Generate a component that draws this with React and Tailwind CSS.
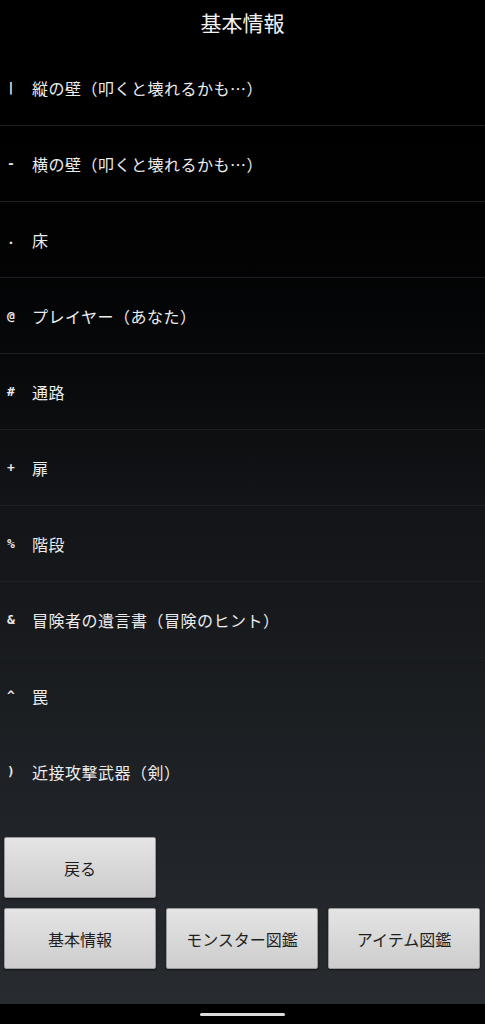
const items = [
  { sym: '|', label: '縦の壁（叩くと壊れるかも…）' },
  { sym: '-', label: '横の壁（叩くと壊れるかも…）' },
  { sym: '.', label: '床' },
  { sym: '@', label: 'プレイヤー（あなた）' },
  { sym: '#', label: '通路' },
  { sym: '+', label: '扉' },
  { sym: '%', label: '階段' },
  { sym: '&', label: '冒険者の遺言書（冒険のヒント）' },
  { sym: '^', label: '罠' },
  { sym: ')', label: '近接攻撃武器（剣）' },
];

function GrayButton({ children }) {
  return (
    <button className="h-[61px] w-[152px] rounded-[2px] border border-[#9a9a9a] bg-gradient-to-b from-[#e4e4e4] to-[#cdcdcd] text-[16px] text-[#1e1e1e] shadow-[0_1px_2px_rgba(0,0,0,0.6)]">
      {children}
    </button>
  );
}

export default function App() {
  return (
    <div
      className="flex h-[1024px] w-[485px] flex-col bg-black text-white"
      style={{ fontFamily: '"Noto Sans CJK JP", "Noto Sans", sans-serif' }}
    >
      <div className="flex flex-1 flex-col bg-gradient-to-b from-black via-[#121417] to-[#282c31]">
        <div className="flex h-[50px] items-center justify-center pb-[4px] text-[21px] text-[#f2f2f2]">
          基本情報
        </div>

        <div className="flex flex-col">
          {items.map((item, i) => (
            <div
              key={i}
              className={`flex h-[76px] items-center ${
                i < items.length - 1 ? 'border-b border-[#1d1f23]' : ''
              }`}
            >
              <span
                className="w-[32px] pl-[7px] text-[13px] font-bold text-[#e8e8e8]"
                style={{ fontFamily: '"DejaVu Sans Mono", monospace' }}
              >
                {item.sym}
              </span>
              <span className="text-[16px] tracking-[0.5px] text-[#ececec]">{item.label}</span>
            </div>
          ))}
        </div>

        <div className="mt-[27px] flex flex-col gap-[10px] pl-[4px]">
          <div className="flex">
            <GrayButton>戻る</GrayButton>
          </div>
          <div className="flex gap-[10px]">
            <GrayButton>基本情報</GrayButton>
            <GrayButton>モンスター図鑑</GrayButton>
            <GrayButton>アイテム図鑑</GrayButton>
          </div>
        </div>
      </div>

      <div className="flex h-[20px] items-center justify-center bg-black">
        <div className="h-[3px] w-[85px] rounded-full bg-[#dcdcdc]" />
      </div>
    </div>
  );
}
